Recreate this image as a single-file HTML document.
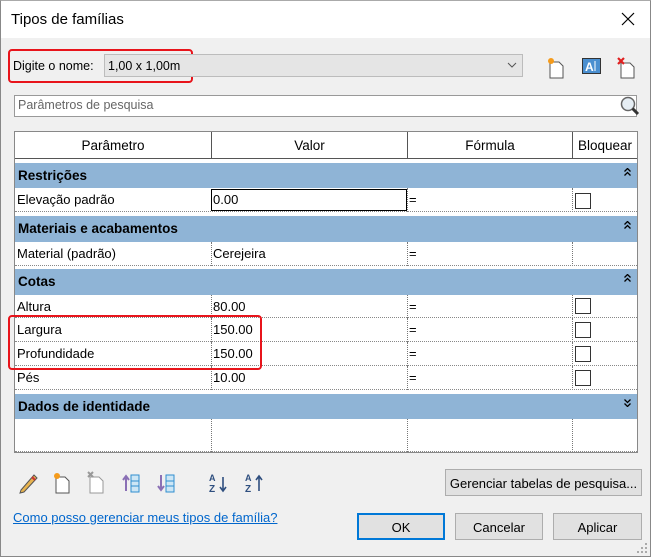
<!DOCTYPE html>
<html><head><meta charset="utf-8"><style>
*{box-sizing:border-box;margin:0;padding:0}
body{width:651px;height:557px;overflow:hidden;background:#f0f0f0;font-family:"Liberation Sans",sans-serif;font-size:13px;color:#000;position:relative}
.a{position:absolute}
.win{left:0;top:0;width:651px;height:557px;border:1px solid #888;border-top:1px solid #aaa}
.title{left:1px;top:1px;width:649px;height:37px;background:#fff}
.row{position:absolute;left:15px;width:622px;background:#fff}
.grp{position:absolute;left:15px;width:622px;background:#8fb4d6;font-weight:bold;font-size:13.5px;padding:5px 0 0 3px}
.cell{position:absolute;top:0;height:100%;padding:4px 0 0 2px;white-space:nowrap}
.vl{position:absolute;top:0;height:100%;border-left:1px dotted #777}
.hl{position:absolute;left:0;bottom:0;width:100%;border-bottom:1px dotted #888}
.cb{position:absolute;left:560px;top:5px;width:16px;height:16px;border:1px solid #333;background:#fff}
.btn{position:absolute;background:#e1e1e1;border:1px solid #adadad;text-align:center;font-size:13px;padding-top:6px}
.chev{position:absolute;right:6px;top:5px}
</style></head><body>
<div class="a win"></div>
<div class="a title"></div>
<div class="a" style="left:11px;top:11px;font-size:15px">Tipos de famílias</div>
<svg class="a" style="left:621px;top:12px" width="14" height="14"><path d="M1 1L13 13M13 1L1 13" stroke="#000" stroke-width="1.2"/></svg>

<div class="a" style="left:8px;top:49px;width:185px;height:34px;border:2.5px solid #e8141b;border-radius:4px"></div>
<div class="a" style="left:13px;top:59px;font-size:12.5px">Digite o nome:</div>
<div class="a" style="left:104px;top:54px;width:419px;height:23px;background:#e5e5e5;border:1px solid #bcbcbc"></div>
<div class="a" style="left:108px;top:59px;font-size:12.5px">1,00 x 1,00m</div>
<svg class="a" style="left:507px;top:62px" width="10" height="6"><path d="M1 1L5 5L9 1" stroke="#555" fill="none"/></svg>

<svg class="a" style="left:546px;top:57px" width="20" height="22"><path d="M4 5H13L17 9V21H4Z" fill="#fff" stroke="#555"/><circle cx="5" cy="4" r="3" fill="#f59b1b"/></svg>
<svg class="a" style="left:582px;top:58px" width="20" height="18"><rect x="0.5" y="0.5" width="18" height="15" fill="#4a8fd0" stroke="#333"/><text x="3" y="13" font-size="12" font-weight="bold" fill="#fff" font-family="Liberation Sans">A</text><path d="M13 3V13" stroke="#fff"/></svg>
<svg class="a" style="left:616px;top:57px" width="22" height="22"><path d="M5 6H14L18 10V21H5Z" fill="#fff" stroke="#555"/><path d="M2 1L8 7M8 1L2 7" stroke="#e02020" stroke-width="2.2"/></svg>

<div class="a" style="left:14px;top:95px;width:623px;height:22px;background:#fff;border:1px solid #999"></div>
<div class="a" style="left:18px;top:98px;font-size:12.5px;color:#666">Parâmetros de pesquisa</div>
<svg class="a" style="left:619px;top:95px" width="22" height="22"><circle cx="9" cy="9" r="6.5" fill="#e6eef4" stroke="#666" stroke-width="1.5"/><path d="M13.5 13.5L19 19" stroke="#333" stroke-width="3"/></svg>

<div class="a" style="left:14px;top:131px;width:624px;height:322px;background:#fff;border:1px solid #888"></div>
<div class="a" style="left:15px;top:132px;width:622px;height:27px;background:#fff;border-bottom:1px solid #555;font-size:13.5px">
<div class="a" style="left:0;width:196px;text-align:center;top:6px">Parâmetro</div>
<div class="a" style="left:196px;width:196px;text-align:center;border-left:1px solid #555;height:27px;top:0;padding-top:6px">Valor</div>
<div class="a" style="left:392px;width:165px;text-align:center;border-left:1px solid #555;height:27px;top:0;padding-top:6px">Fórmula</div>
<div class="a" style="left:557px;width:65px;text-align:center;border-left:1px solid #555;height:27px;top:0;padding-top:6px">Bloquear</div>
</div>

<div class="grp" style="top:163px;height:25px">Restrições<svg class="chev" width="7" height="8"><path d="M0.5 3.5L3.5 0.5L6.5 3.5M0.5 7.5L3.5 4.5L6.5 7.5" stroke="#000" fill="none" stroke-width="1.3"/></svg></div>
<div class="row" style="top:188px;height:24px"><div class="cell" style="left:0">Elevação padrão</div><div class="a" style="left:196px;top:1px;width:196px;height:22px;border:1px solid #000;padding:2px 0 0 1px">0.00</div><div class="vl" style="left:392px"></div><div class="cell" style="left:392px">=</div><div class="vl" style="left:557px"></div><div class="cb"></div><div class="hl"></div></div>

<div class="grp" style="top:216px;height:26px">Materiais e acabamentos<svg class="chev" width="7" height="8"><path d="M0.5 3.5L3.5 0.5L6.5 3.5M0.5 7.5L3.5 4.5L6.5 7.5" stroke="#000" fill="none" stroke-width="1.3"/></svg></div>
<div class="row" style="top:242px;height:24px"><div class="cell" style="left:0">Material (padrão)</div><div class="vl" style="left:196px"></div><div class="cell" style="left:196px">Cerejeira</div><div class="vl" style="left:392px"></div><div class="cell" style="left:392px">=</div><div class="vl" style="left:557px"></div><div class="hl"></div></div>

<div class="grp" style="top:269px;height:26px">Cotas<svg class="chev" width="7" height="8"><path d="M0.5 3.5L3.5 0.5L6.5 3.5M0.5 7.5L3.5 4.5L6.5 7.5" stroke="#000" fill="none" stroke-width="1.3"/></svg></div>
<div class="row" style="top:295px;height:23px"><div class="cell" style="left:0">Altura</div><div class="vl" style="left:196px"></div><div class="cell" style="left:196px">80.00</div><div class="vl" style="left:392px"></div><div class="cell" style="left:392px">=</div><div class="vl" style="left:557px"></div><div class="cb" style="top:3px"></div><div class="hl"></div></div>
<div class="row" style="top:318px;height:24px"><div class="cell" style="left:0">Largura</div><div class="vl" style="left:196px"></div><div class="cell" style="left:196px">150.00</div><div class="vl" style="left:392px"></div><div class="cell" style="left:392px">=</div><div class="vl" style="left:557px"></div><div class="cb" style="top:4px"></div><div class="hl"></div></div>
<div class="row" style="top:342px;height:24px"><div class="cell" style="left:0">Profundidade</div><div class="vl" style="left:196px"></div><div class="cell" style="left:196px">150.00</div><div class="vl" style="left:392px"></div><div class="cell" style="left:392px">=</div><div class="vl" style="left:557px"></div><div class="cb" style="top:4px"></div><div class="hl"></div></div>
<div class="row" style="top:366px;height:24px"><div class="cell" style="left:0">Pés</div><div class="vl" style="left:196px"></div><div class="cell" style="left:196px">10.00</div><div class="vl" style="left:392px"></div><div class="cell" style="left:392px">=</div><div class="vl" style="left:557px"></div><div class="cb" style="top:4px"></div><div class="hl"></div></div>

<div class="grp" style="top:394px;height:25px">Dados de identidade<svg class="chev" width="7" height="8"><path d="M0.5 0.5L3.5 3.5L6.5 0.5M0.5 4.5L3.5 7.5L6.5 4.5" stroke="#000" fill="none" stroke-width="1.3"/></svg></div>
<div class="row" style="top:419px;height:33px"><div class="vl" style="left:196px"></div><div class="vl" style="left:392px"></div><div class="vl" style="left:557px"></div><div class="hl"></div></div>

<div class="a" style="left:8px;top:315px;width:254px;height:55px;border:2.5px solid #e8141b;border-radius:4px"></div>

<svg class="a" style="left:17px;top:471px" width="22" height="24"><path d="M4 19L17 4L20 7L7 21L3 22Z" fill="#e8b450" stroke="#555"/><path d="M15 6L18 9" stroke="#c33" stroke-width="2"/></svg>
<svg class="a" style="left:53px;top:471px" width="20" height="24"><path d="M3 6H12L16 10V22H3Z" fill="#fff" stroke="#555"/><circle cx="4" cy="5" r="3" fill="#f59b1b"/></svg>
<svg class="a" style="left:87px;top:471px" width="20" height="24"><path d="M3 6H12L16 10V22H3Z" fill="#fff" stroke="#999"/><path d="M1 1L6 6M6 1L1 6" stroke="#999" stroke-width="2"/></svg>
<svg class="a" style="left:122px;top:471px" width="20" height="24"><path d="M4 20V6M1 9L4 5L7 9" stroke="#8a6fb5" stroke-width="2" fill="none"/><rect x="9" y="4" width="8" height="17" fill="#cde6f5" stroke="#2f8ed0"/><path d="M9 10H17M9 15H17" stroke="#2f8ed0"/></svg>
<svg class="a" style="left:157px;top:471px" width="20" height="24"><path d="M4 4V18M1 15L4 19L7 15" stroke="#8a6fb5" stroke-width="2" fill="none"/><rect x="9" y="4" width="8" height="17" fill="#cde6f5" stroke="#2f8ed0"/><path d="M9 10H17M9 15H17" stroke="#2f8ed0"/></svg>
<svg class="a" style="left:208px;top:471px" width="20" height="24"><text x="1" y="10" font-size="9" font-weight="bold" fill="#2f4f7f" font-family="Liberation Sans">A</text><text x="1" y="21" font-size="10" font-weight="bold" fill="#2f4f7f" font-family="Liberation Sans">Z</text><path d="M15 6V20M12 16L15 20L18 16" stroke="#2f4f7f" stroke-width="1.6" fill="none"/></svg>
<svg class="a" style="left:244px;top:471px" width="20" height="24"><text x="1" y="10" font-size="9" font-weight="bold" fill="#2f4f7f" font-family="Liberation Sans">A</text><text x="1" y="21" font-size="10" font-weight="bold" fill="#2f4f7f" font-family="Liberation Sans">Z</text><path d="M15 20V5M12 9L15 5L18 9" stroke="#2f4f7f" stroke-width="1.6" fill="none"/></svg>

<div class="btn" style="left:445px;top:469px;width:197px;height:27px">Gerenciar tabelas de pesquisa...</div>
<div class="a" style="left:13px;top:510px;color:#0066cc;text-decoration:underline;font-size:13px">Como posso gerenciar meus tipos de família?</div>
<div class="btn" style="left:357px;top:513px;width:88px;height:27px;border:2px solid #0078d7;padding-top:5px">OK</div>
<div class="btn" style="left:455px;top:513px;width:88px;height:27px">Cancelar</div>
<div class="btn" style="left:553px;top:513px;width:89px;height:27px">Aplicar</div>
<svg class="a" style="left:637px;top:543px" width="12" height="12"><g fill="#aaa"><rect x="8" y="0" width="2" height="2"/><rect x="4" y="4" width="2" height="2"/><rect x="8" y="4" width="2" height="2"/><rect x="0" y="8" width="2" height="2"/><rect x="4" y="8" width="2" height="2"/><rect x="8" y="8" width="2" height="2"/></g></svg>
</body></html>
